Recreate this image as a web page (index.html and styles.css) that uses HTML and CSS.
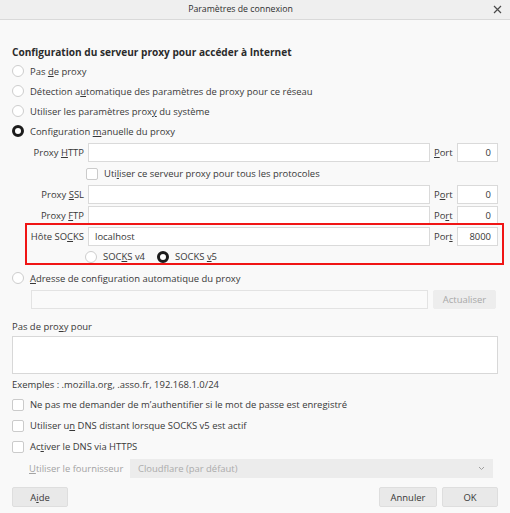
FILE: index.html
```html
<!DOCTYPE html>
<html lang="fr">
<head>
<meta charset="utf-8">
<title>Paramètres de connexion</title>
<link rel="stylesheet" href="styles.css">
</head>
<body>
<div class="titlebar">
  <span></span>
  <span class="title">Paramètres de connexion</span>
  <span class="close"><svg width="9" height="9" viewBox="0 0 9 9"><path d="M1 1L8 8M8 1L1 8" stroke="#4a4a4a" stroke-width="1.2" fill="none"/></svg></span>
</div>
<main class="content">
  <h1 class="heading">Configuration du serveur proxy pour accéder à Internet</h1>
  <div class="radio-row"><span class="radio"></span><span>Pas <u>d</u>e proxy</span></div>
  <div class="radio-row"><span class="radio"></span><span>Détection a<u>u</u>tomatique des paramètres de proxy pour ce réseau</span></div>
  <div class="radio-row"><span class="radio"></span><span>Utiliser les paramètres prox<u>y</u> du système</span></div>
  <div class="radio-row"><span class="radio checked"></span><span>Configuration <u>m</u>anuelle du proxy</span></div>

  <div class="manual">
    <label class="lbl">Proxy <u>H</u>TTP</label>
    <div class="input"></div>
    <label class="port-lbl"><u>P</u>ort</label>
    <div class="input port">0</div>

    <div class="share"><span class="check"></span><span>Uti<u>l</u>iser ce serveur proxy pour tous les protocoles</span></div>

    <label class="lbl">Proxy <u>S</u>SL</label>
    <div class="input"></div>
    <label class="port-lbl">P<u>o</u>rt</label>
    <div class="input port">0</div>

    <label class="lbl">Proxy <u>F</u>TP</label>
    <div class="input"></div>
    <label class="port-lbl">Po<u>r</u>t</label>
    <div class="input port">0</div>

    <label class="lbl">Hôte SO<u>C</u>KS</label>
    <div class="input text">localhost</div>
    <label class="port-lbl">Por<u>t</u></label>
    <div class="input port">8000</div>

    <div class="socks">
      <span class="radio"></span><span>SOC<u>K</u>S v4</span>
      <span class="radio checked v5"></span><span>SOCKS <u>v</u>5</span>
    </div>
  </div>

  <div class="radio-row auto"><span class="radio"></span><span><u>A</u>dresse de configuration automatique du proxy</span></div>
  <div class="url-row">
    <div class="input url"></div>
    <button class="btn disabled">Actualiser</button>
  </div>

  <div class="plain noproxy-lbl">Pas de pro<u>x</u>y pour</div>
  <div class="textarea"></div>
  <div class="plain examples">Exemples : .mozilla.org, .asso.fr, 192.168.1.0/24</div>

  <div class="check-row first"><span class="check"></span><span>Ne pas me demander de m’authentifier si le mot de passe est enregistré</span></div>
  <div class="check-row"><span class="check"></span><span>Utiliser u<u>n</u> DNS distant lorsque SOCKS v5 est actif</span></div>
  <div class="check-row"><span class="check"></span><span>Ac<u>t</u>iver le DNS via HTTPS</span></div>

  <div class="provider-row">
    <span class="muted"><u>U</u>tiliser le fournisseur</span>
    <div class="select"><span>Cloudflare (par défaut)</span><svg width="7" height="5" viewBox="0 0 7 5"><path d="M1 1L3.5 3.5L6 1" stroke="#a0a0a0" stroke-width="1" fill="none"/></svg></div>
  </div>

  <div class="buttons">
    <button class="btn aide">A<u>i</u>de</button>
    <span class="spacer"></span>
    <button class="btn">Annuler</button>
    <button class="btn">OK</button>
  </div>
</main>
<div class="highlight"></div>
</body>
</html>
```
FILE: styles.css
```css
* { box-sizing: border-box; }
html, body { margin: 0; padding: 0; }
body {
  width: 510px;
  height: 513px;
  overflow: hidden;
  background: #f9f9f9;
  color: #383838;
  font-family: "Open Sans", "Noto Sans", sans-serif;
  font-size: 9.45px;
  position: relative;
}
u { text-decoration: underline; text-underline-offset: 1px; text-decoration-thickness: 1px; }

.titlebar {
  height: 20px;
  background: #efefef;
  border-bottom: 1px solid #d9d9d9;
  display: grid;
  grid-template-columns: 1fr auto 1fr;
  align-items: center;
  color: #2e2e2e;
}
.title { line-height: 19px; font-size: 8.75px; margin-right: 29px; }
.close { justify-self: end; margin-right: 8px; display: flex; align-items: center; }

.content { padding: 0 12px; }

.heading {
  margin: 24px 0 1px;
  font-size: 10.1px;
  font-weight: 700;
  line-height: 16px;
  color: #2b2b2b;
}

.radio-row { height: 20px; display: flex; align-items: center; gap: 6px; }
.radio {
  width: 12px; height: 12px; border-radius: 50%;
  border: 1px solid #cdcdcd; background: #fff; flex: none;
}
.radio.checked { border: 3.5px solid #1c1c1c; }

.check {
  width: 12px; height: 12px; border-radius: 2px;
  border: 1px solid #cbcbcb; background: #fff; flex: none;
}

.manual {
  margin: 1px 0 0 17px;
  display: grid;
  grid-template-columns: 55px 342px 19px 41px;
  grid-template-rows: repeat(5, 21px) 19px;
  column-gap: 4px;
  align-items: center;
}
.lbl { text-align: right; white-space: nowrap; }
.port-lbl { white-space: nowrap; }
.input {
  height: 19px; background: #fff; border: 1px solid #dadada;
  display: flex; align-items: center; padding: 0 6px;
}
.input.port { justify-content: flex-end; }
.share { grid-column: 2 / 5; display: flex; align-items: center; gap: 6px; margin-left: -2px; }
.socks {
  grid-column: 2 / 5; height: 19px; display: flex; align-items: center; gap: 6px; margin-left: -3px;
}
.socks .v5 { margin-left: 6px; }

.radio-row.auto { margin-top: 2px; }

.url-row { margin: 2px 0 0 19px; display: flex; gap: 5px; height: 19px; }
.input.url { width: 397px; background: #fafafa; border-color: #e3e3e3; }

.btn {
  font: inherit; color: #383838;
  height: 20px; padding: 0; width: 56px;
  background: #e9e9e9; border: 1px solid #dedede; border-radius: 2px;
}
.btn.disabled { width: 63px; height: 19px; color: #a8a8a8; background: #ededed; border-color: #ededed; }

.plain { line-height: 16px; }
.noproxy-lbl { margin-top: 10px; }
.textarea { margin-top: 1px; height: 38px; background: #fff; border: 1px solid #d8d8d8; }
.examples { margin-top: 3px; }

.check-row { height: 21px; display: flex; align-items: center; gap: 6px; }
.check-row.first { margin-top: 1px; }

.provider-row { margin: 2px 0 0 17px; height: 19px; display: flex; align-items: center; gap: 6px; }
.muted { color: #a3a3a3; width: 95px; flex: none; white-space: nowrap; }
.select {
  width: 363px; height: 19px; background: #ececec; color: #ababab; flex: none;
  display: flex; align-items: center; justify-content: space-between; padding: 0 8px 0 8px;
}

.buttons { margin-top: 9px; display: flex; gap: 5px; }
.buttons .spacer { flex: 1; }
.buttons .btn:nth-child(3) { width: 58px; }

.highlight {
  position: absolute; left: 25px; top: 223px; width: 479px; height: 42px;
  border: 2px solid #f01515; pointer-events: none;
}
```
